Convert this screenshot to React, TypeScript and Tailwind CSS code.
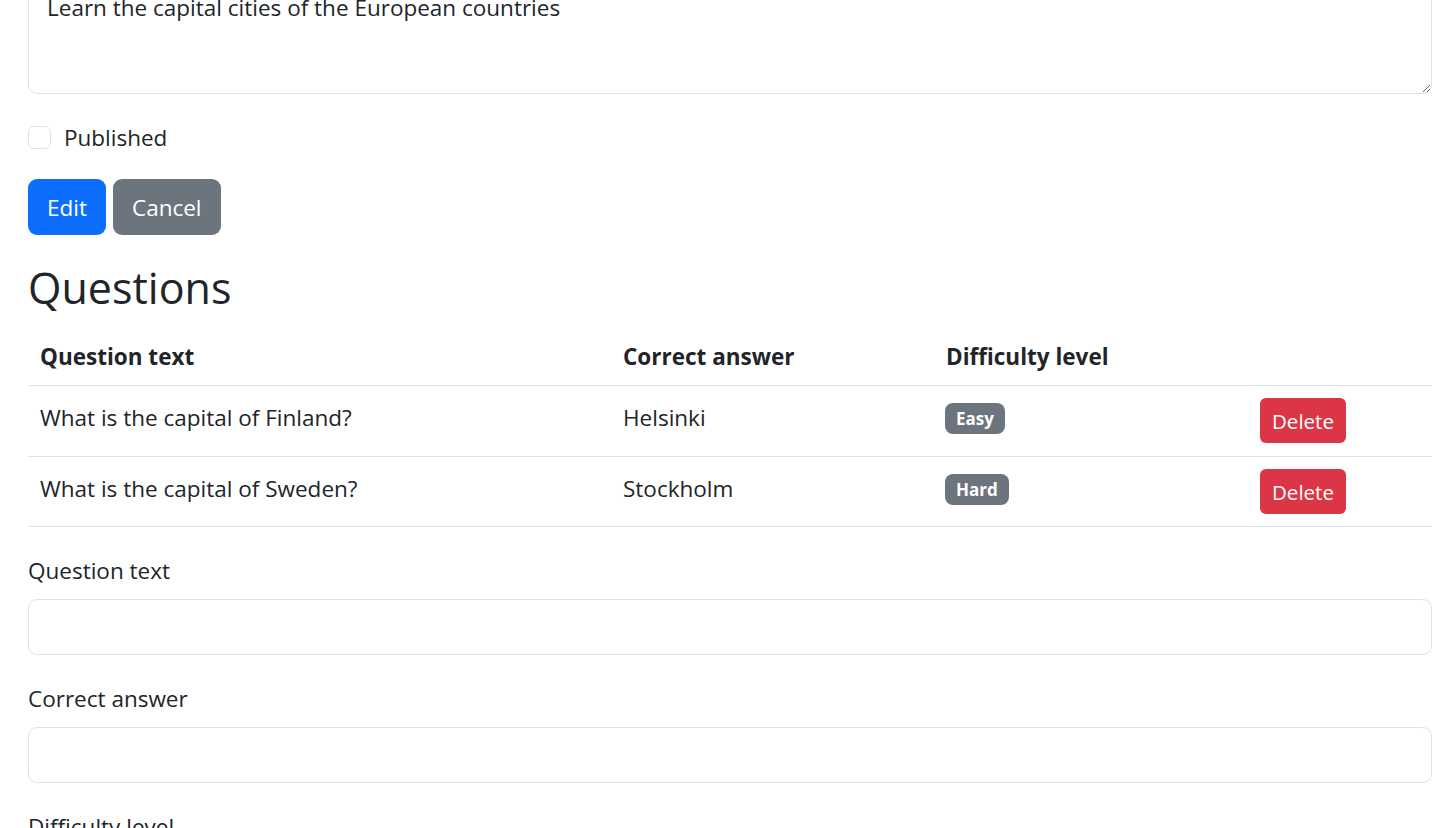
import { useState } from "react";

interface Question {
  id: number;
  text: string;
  answer: string;
  difficulty: "Easy" | "Hard";
}

const QUESTIONS: Question[] = [
  { id: 1, text: "What is the capital of Finland?", answer: "Helsinki", difficulty: "Easy" },
  { id: 2, text: "What is the capital of Sweden?", answer: "Stockholm", difficulty: "Hard" },
];

export default function App() {
  const [published, setPublished] = useState(false);
  const [questions, setQuestions] = useState(QUESTIONS);

  return (
    <div className="min-h-screen bg-white px-[28px] pr-[24px] text-[#212529] font-['Segoe_UI','Open_Sans',sans-serif] text-[22.5px] leading-[35px] overflow-hidden">
      {/* Quiz description (page is scrolled, top of the field is off screen) */}
      <textarea
        readOnly
        defaultValue="Learn the capital cities of the European countries"
        className="-mt-[20px] block h-[114px] w-full rounded-[9px] border border-[#dee2e6] px-[18px] py-[9px] text-[22.5px] leading-[35px] text-[#212529] outline-none resize-y"
      />

      <div className="mt-[26px] flex h-[35px] items-center">
        <input
          id="published"
          type="checkbox"
          checked={published}
          onChange={(e) => setPublished(e.target.checked)}
          className="m-0 mr-[13px] h-[23px] w-[23px] appearance-none rounded-[6px] border border-[#dee2e6] bg-white checked:bg-[#0d6efd]"
        />
        <label htmlFor="published">Published</label>
      </div>

      <div className="mt-[24px] flex gap-[7px]">
        <button className="h-[56px] rounded-[9px] bg-[#0d6efd] px-[19px] text-[22.5px] text-white">
          Edit
        </button>
        <button className="h-[56px] rounded-[9px] bg-[#6c757d] px-[19px] text-[22.5px] text-white">
          Cancel
        </button>
      </div>

      <h2 className="mt-[25px] mb-[12px] text-[43px] font-normal leading-[55px]">Questions</h2>

      <table className="w-full table-fixed border-collapse">
        <colgroup>
          <col className="w-[583px]" />
          <col className="w-[323px]" />
          <col className="w-[314px]" />
          <col />
        </colgroup>
        <thead>
          <tr className="border-b border-[#dee2e6]">
            <th className="px-[12px] pt-[12px] pb-[11px] text-left font-bold">Question text</th>
            <th className="px-[12px] pt-[12px] pb-[11px] text-left font-bold">Correct answer</th>
            <th className="px-[12px] pt-[12px] pb-[11px] text-left font-bold">Difficulty level</th>
            <th className="px-[12px] pt-[12px] pb-[11px]" />
          </tr>
        </thead>
        <tbody>
          {questions.map((q, i) => (
            <tr key={q.id} className="border-b border-[#dee2e6]">
              <td className="px-[12px] pt-[14px] align-top">{q.text}</td>
              <td className="px-[12px] pt-[14px] align-top">{q.answer}</td>
              <td className="px-[11px] pt-[17px] align-top">
                <span className="block w-fit rounded-[8px] bg-[#6c757d] px-[11px] pt-[7px] pb-[6px] text-[17px] font-bold leading-[18px] text-white">
                  {q.difficulty}
                </span>
              </td>
              <td className={`px-[12px] pt-[12px] ${i === 0 ? "pb-[13px]" : "pb-[12px]"} align-top`}>
                <button
                  onClick={() => setQuestions((prev) => prev.filter((x) => x.id !== q.id))}
                  className="block h-[45px] rounded-[6px] bg-[#dc3545] px-[12px] text-[20.5px] leading-[30px] text-white"
                >
                  Delete
                </button>
              </td>
            </tr>
          ))}
        </tbody>
      </table>

      {/* New question form */}
      <div className="mt-[26px]">
        <label className="mb-[11px] block">Question text</label>
        <input
          type="text"
          className="block h-[56px] w-full rounded-[9px] border border-[#dee2e6] px-[18px] text-[22.5px] outline-none"
        />
      </div>
      <div className="mt-[26px]">
        <label className="mb-[11px] block">Correct answer</label>
        <input
          type="text"
          className="block h-[56px] w-full rounded-[9px] border border-[#dee2e6] px-[18px] text-[22.5px] outline-none"
        />
      </div>
      <div className="mt-[26px]">
        <label className="mb-[11px] block">Difficulty level</label>
      </div>
    </div>
  );
}
